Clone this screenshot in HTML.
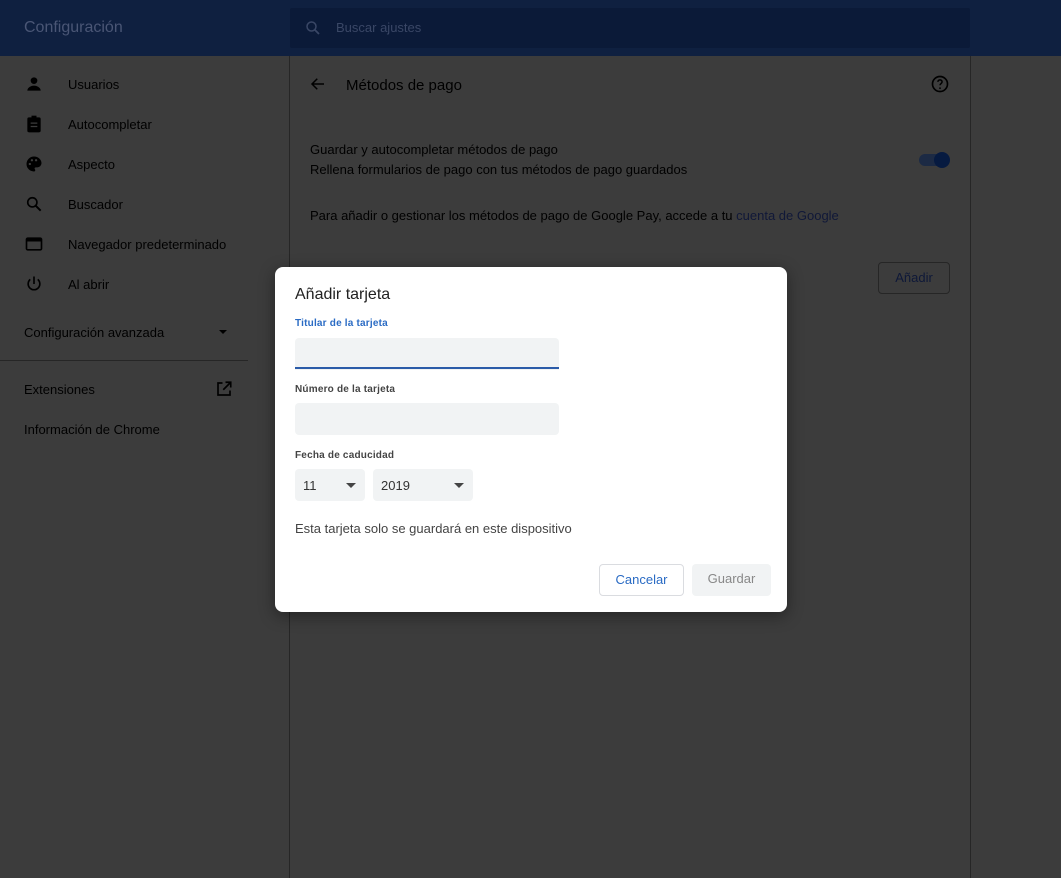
<!DOCTYPE html>
<html><head><meta charset="utf-8"><style>
*{box-sizing:border-box;margin:0;padding:0}
html,body{background:#3c3c3c}
body{width:1061px;height:878px;overflow:hidden;font-family:"Liberation Sans",Arial,sans-serif;position:relative;color:#000}
.hdr{position:absolute;left:0;top:0;width:1061px;height:56px;background:#0f2040}
.hdr .t{position:absolute;left:24px;top:19px;font-size:16px;color:#4a5675}
.search{position:absolute;left:290px;top:8px;width:680px;height:40px;background:#0b1a38;border-radius:2px}
.search span{position:absolute;left:46px;top:12px;font-size:13px;color:#3a4766}
.nav{position:absolute;left:24px;font-size:13px;color:#000}
.nav svg{position:absolute;left:0;top:-3px}
.nav span{position:absolute;left:44px;top:0;white-space:nowrap}
.vline{position:absolute;top:56px;width:1px;height:822px;background:#262626}
.txt{position:absolute;font-size:13px;color:#000;white-space:nowrap}
.dlg{position:absolute;left:275px;top:267px;width:512px;height:345px;background:#fff;border-radius:8px;box-shadow:0 4px 16px rgba(0,0,0,.4)}
.dlg .lbl{position:absolute;left:20px;font-size:10px;color:#444;font-weight:bold;letter-spacing:.2px}
.inp{position:absolute;left:20px;width:264px;height:32px;background:#f1f3f4;border-radius:4px 4px 0 0}
.sel{position:absolute;top:202px;height:32px;background:#f1f3f4;border-radius:4px;font-size:13px;color:#333;padding:9px 0 0 8px}
.sel:after{content:"";position:absolute;right:9px;top:14px;border:5px solid transparent;border-top-color:#444;border-bottom:0}
.btn{position:absolute;top:297px;height:32px;border-radius:4px;font-size:13px;text-align:center;line-height:30px}
</style></head><body>
<div class="hdr"><div class="t">Configuración</div>
<div class="search"><svg style="position:absolute;left:14px;top:11px" width="18" height="18" viewBox="0 0 24 24"><circle cx="10" cy="10" r="6" fill="none" stroke="#3a4766" stroke-width="2"/><path d="M14.5 14.5L20 20" stroke="#3a4766" stroke-width="2.4"/></svg><span>Buscar ajustes</span></div></div>

<div class="nav" style="top:77px"><svg width="20" height="20" viewBox="0 0 24 24"><circle cx="12" cy="8" r="4" fill="#000"/><path d="M4 20c0-4 5-6 8-6s8 2 8 6z" fill="#000"/></svg><span>Usuarios</span></div>
<div class="nav" style="top:117px"><svg width="20" height="20" viewBox="0 0 24 24"><rect x="4" y="4" width="16" height="18" rx="2" fill="#000"/><rect x="9" y="2" width="6" height="4" fill="#000"/><path d="M8 11h8M8 15h8" stroke="#3c3c3c" stroke-width="1.5"/></svg><span>Autocompletar</span></div>
<div class="nav" style="top:157px"><svg width="20" height="20" viewBox="0 0 24 24"><path d="M12 3a9 9 0 000 18c1 0 1.5-.8 1.5-1.5 0-1-.8-1.3-.8-2.2 0-.8.7-1.3 1.5-1.3H16a5 5 0 005-5c0-4.4-4-8-9-8z" fill="#000"/><circle cx="7" cy="12" r="1.4" fill="#3c3c3c"/><circle cx="9.5" cy="7.5" r="1.4" fill="#3c3c3c"/><circle cx="14.5" cy="7.5" r="1.4" fill="#3c3c3c"/></svg><span>Aspecto</span></div>
<div class="nav" style="top:197px"><svg width="20" height="20" viewBox="0 0 24 24"><circle cx="10" cy="10" r="5.5" fill="none" stroke="#000" stroke-width="2"/><path d="M14 14l6 6" stroke="#000" stroke-width="2.4"/></svg><span>Buscador</span></div>
<div class="nav" style="top:237px"><svg width="20" height="20" viewBox="0 0 24 24"><rect x="3" y="5" width="18" height="14" rx="1.5" fill="none" stroke="#000" stroke-width="2"/><rect x="3" y="5" width="18" height="4" fill="#000"/></svg><span>Navegador predeterminado</span></div>
<div class="nav" style="top:277px"><svg width="20" height="20" viewBox="0 0 24 24"><path d="M12 3v9" stroke="#000" stroke-width="2"/><path d="M7.5 6.5a7 7 0 109 0" fill="none" stroke="#000" stroke-width="2"/></svg><span>Al abrir</span></div>
<div class="txt" style="left:24px;top:325px">Configuración avanzada</div>
<div style="position:absolute;left:219px;top:330px;border:4px solid transparent;border-top:4px solid #000;border-bottom:0"></div>
<div style="position:absolute;left:0;top:360px;width:248px;height:1px;background:#262626"></div>
<div class="txt" style="left:24px;top:382px">Extensiones</div>
<svg style="position:absolute;left:215px;top:380px" width="18" height="18" viewBox="0 0 24 24"><path d="M10 4H4v16h16v-6" fill="none" stroke="#000" stroke-width="2.2"/><path d="M14 3h7v7M21 3L11 13" fill="none" stroke="#000" stroke-width="2.2"/></svg>
<div class="txt" style="left:24px;top:422px">Información de Chrome</div>

<div class="vline" style="left:289px"></div>
<div class="vline" style="left:970px"></div>
<svg style="position:absolute;left:309px;top:75px" width="18" height="18" viewBox="0 0 24 24"><path d="M20 12H5M11 5l-7 7 7 7" fill="none" stroke="#000" stroke-width="2"/></svg>
<div class="txt" style="left:346px;top:77px;font-size:15px">Métodos de pago</div>
<svg style="position:absolute;left:930px;top:74px" width="20" height="20" viewBox="0 0 24 24"><circle cx="12" cy="12" r="9" fill="none" stroke="#000" stroke-width="2"/><path d="M9.5 9.5a2.5 2.5 0 115 0c0 2-2.5 2-2.5 4" fill="none" stroke="#000" stroke-width="1.8"/><circle cx="12" cy="17" r="1.1" fill="#000"/></svg>
<div class="txt" style="left:310px;top:142px">Guardar y autocompletar métodos de pago</div>
<div class="txt" style="left:310px;top:162px">Rellena formularios de pago con tus métodos de pago guardados</div>
<div style="position:absolute;left:919px;top:154px;width:30px;height:12px;border-radius:6px;background:#1c2a44"></div>
<div style="position:absolute;left:934px;top:152px;width:16px;height:16px;border-radius:50%;background:#061a40"></div>
<div class="txt" style="left:310px;top:208px">Para añadir o gestionar los métodos de pago de Google Pay, accede a tu <span style="color:#101838">cuenta de Google</span></div>
<div style="position:absolute;left:878px;top:262px;width:72px;height:32px;border:1px solid #262626;border-radius:4px;font-size:13px;color:#0e1838;text-align:center;line-height:30px">Añadir</div>

<div class="dlg">
<div style="position:absolute;left:20px;top:19px;font-size:16px;color:#222">Añadir tarjeta</div>
<div class="lbl" style="top:51px;color:#2a6bc4">Titular de la tarjeta</div>
<div class="inp" style="top:71px"></div>
<div style="position:absolute;left:20px;top:100px;width:264px;height:2px;background:#2b5ba8"></div>
<div class="lbl" style="top:117px">Número de la tarjeta</div>
<div class="inp" style="top:136px;border-radius:4px"></div>
<div class="lbl" style="top:183px">Fecha de caducidad</div>
<div class="sel" style="left:20px;width:70px">11</div>
<div class="sel" style="left:98px;width:100px">2019</div>
<div style="position:absolute;left:20px;top:254px;font-size:13px;color:#444">Esta tarjeta solo se guardará en este dispositivo</div>
<div class="btn" style="left:324px;width:85px;border:1px solid #dadce0;color:#2a6bc4">Cancelar</div>
<div class="btn" style="left:417px;width:79px;background:#f1f3f4;color:#888">Guardar</div>
</div>
</body></html>
